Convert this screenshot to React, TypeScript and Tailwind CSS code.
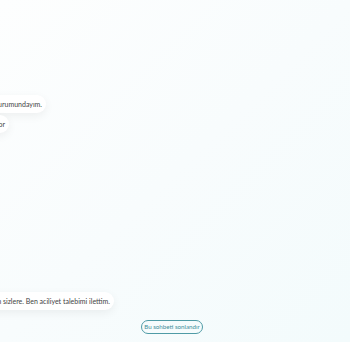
import React from 'react';

interface Bubble {
  text: string;
  right: string;
  top: string;
}

const bubbles: Bubble[] = [
  { text: 'Şu anda yolda kaldım ve aracımı kullanamayacak durumundayım.', right: 'w-[46px]', top: 'mt-[95px]' },
  { text: 'Lastiğim patladı, yardım bekliyor', right: 'w-[9px]', top: 'mt-[2px]' },
  { text: 'Teşekkür ederim sizlere. Ben aciliyet talebimi ilettim.', right: 'w-[114px]', top: 'mt-[159px]' },
];

export default function App() {
  return (
    <div
      className="w-[350px] h-[350px] overflow-hidden flex flex-col bg-white"
      style={{ fontFamily: 'Lato, "Open Sans", sans-serif' }}
    >
      <div className="h-[342px] flex flex-col bg-gradient-to-br from-[#fdfefe] via-[#f8fcfd] to-[#f3fbfc]">
        {bubbles.map((b) => (
          <div key={b.text} className={`${b.right} ${b.top} flex justify-end`}>
            <div className="shrink-0 whitespace-nowrap h-[18px] flex items-center bg-white rounded-full pl-3 pr-[4px] text-[7px] text-[#444] shadow-[0_3px_10px_rgba(0,0,0,0.06)]">
              {b.text}
            </div>
          </div>
        ))}
        <div className="mt-[10px] flex justify-center">
          <button className="ml-[-6px] h-[14px] w-[62px] flex items-center justify-center rounded-full border-[1.5px] border-[#4f9ba6] text-[6.2px] leading-none text-[#3f8f9b] bg-transparent whitespace-nowrap">
            Bu sohbeti sonlandır
          </button>
        </div>
      </div>
      <div className="flex-1 bg-white" />
    </div>
  );
}
